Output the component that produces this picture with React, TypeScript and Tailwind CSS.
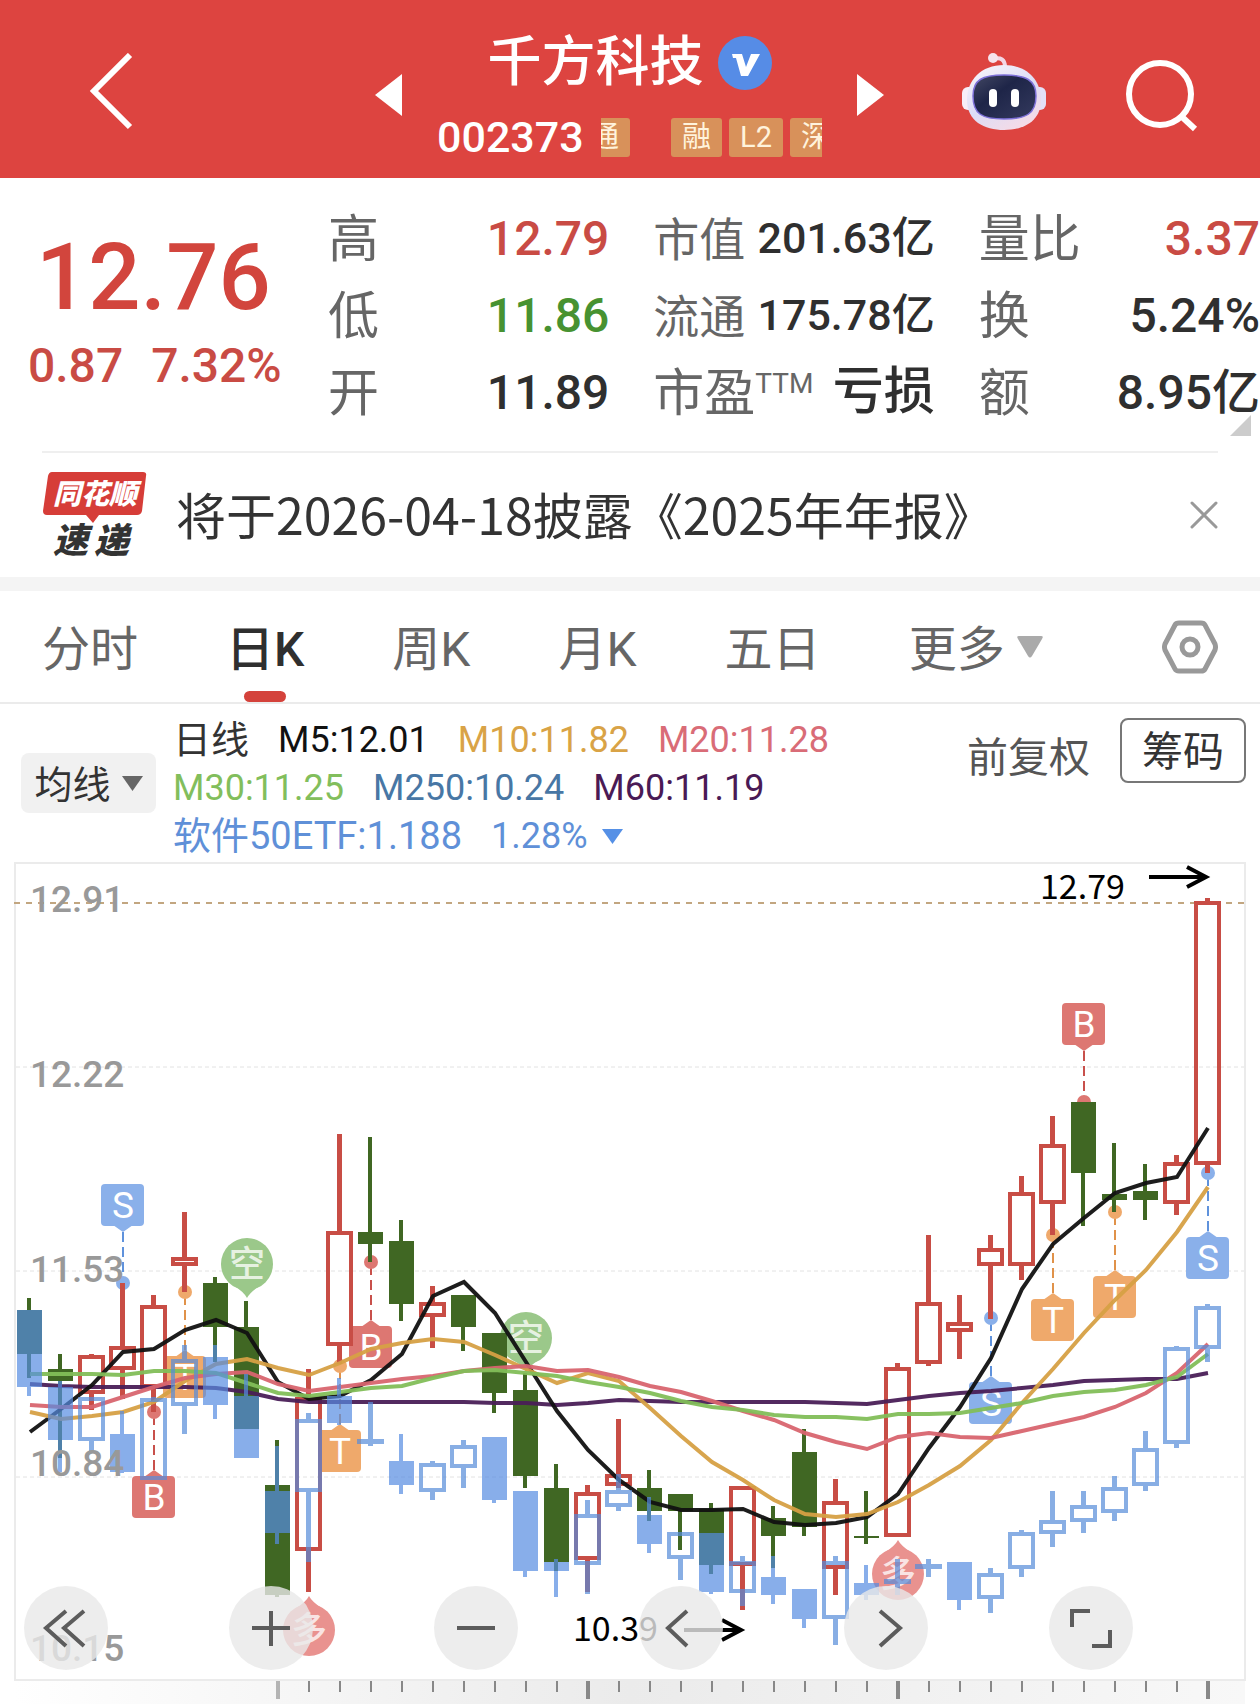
import { useState } from "react";
import type { ReactNode } from "react";

type Candle = {
  dir: 'up' | 'down';
  high: number;
  top: number;
  bottom: number;
  low: number;
};

type Marker = {
  index: number;
  label: 'B' | 'S' | 'T';
  dot: number;
  above?: boolean;
};

const STEP = 31;
const FIRST_X = 30;
const FONT = "font-['Roboto','Noto_Sans_CJK_SC',sans-serif]";
const FONT_CJK = "font-['Noto_Sans_CJK_SC',sans-serif]";

const up = (high: number, top: number, bottom: number, low: number): Candle => ({ dir: 'up', high, top, bottom, low });
const down = (high: number, top: number, bottom: number, low: number): Candle => ({ dir: 'down', high, top, bottom, low });

const stockCandles: Candle[] = [
  down(1298, 1310, 1354, 1378), down(1354, 1369, 1381, 1458), up(1354, 1355, 1394, 1410), up(1283, 1346, 1370, 1399),
  up(1295, 1305, 1388, 1412), up(1212, 1257, 1266, 1292), down(1277, 1283, 1327, 1362), down(1301, 1327, 1429, 1429),
  down(1440, 1485, 1595, 1597), up(1369, 1397, 1551, 1592), up(1134, 1231, 1346, 1364), down(1137, 1232, 1244, 1262),
  down(1220, 1241, 1304, 1321), up(1286, 1302, 1317, 1348), down(1295, 1295, 1327, 1351), down(1333, 1333, 1393, 1413),
  down(1373, 1390, 1476, 1488), down(1464, 1488, 1562, 1571), up(1485, 1492, 1560, 1592), up(1419, 1474, 1486, 1488),
  down(1470, 1488, 1511, 1521), down(1494, 1494, 1511, 1550), down(1503, 1509, 1565, 1574), up(1486, 1486, 1566, 1610),
  down(1506, 1518, 1536, 1568), down(1429, 1452, 1527, 1536), up(1479, 1501, 1569, 1595), down(1491, 1536, 1538, 1544),
  up(1363, 1367, 1537, 1537), up(1235, 1302, 1364, 1366), up(1295, 1322, 1332, 1359), up(1235, 1248, 1266, 1319),
  up(1176, 1192, 1266, 1280), up(1116, 1144, 1204, 1235), down(1102, 1102, 1173, 1226), down(1143, 1194, 1200, 1212),
  down(1164, 1191, 1200, 1220), up(1155, 1162, 1204, 1215), up(898, 901, 1165, 1173),
];

const etfCandles: Candle[] = [
  down(1310, 1310, 1387, 1396), down(1381, 1387, 1440, 1472), up(1397, 1397, 1441, 1451), down(1411, 1434, 1472, 1473),
  up(1397, 1398, 1480, 1480), up(1345, 1359, 1406, 1434), down(1345, 1357, 1405, 1419), down(1374, 1396, 1458, 1458),
  down(1446, 1491, 1533, 1544), up(1413, 1419, 1492, 1562), down(1378, 1396, 1423, 1425), up(1402, 1439, 1444, 1446),
  down(1434, 1461, 1485, 1494), up(1461, 1463, 1492, 1500), up(1440, 1445, 1468, 1488), down(1437, 1437, 1500, 1503),
  down(1491, 1491, 1571, 1577), down(1559, 1562, 1571, 1597), up(1500, 1514, 1565, 1594), up(1474, 1490, 1507, 1511),
  down(1497, 1515, 1544, 1553), up(1532, 1532, 1559, 1580), down(1533, 1533, 1592, 1594), up(1556, 1561, 1593, 1606),
  down(1556, 1577, 1595, 1604), down(1589, 1589, 1619, 1628), up(1556, 1561, 1619, 1645), down(1565, 1583, 1595, 1600),
  up(1559, 1579, 1584, 1595), up(1559, 1564, 1569, 1577), down(1562, 1562, 1600, 1610), up(1568, 1573, 1599, 1613),
  up(1530, 1532, 1569, 1577), up(1491, 1520, 1534, 1547), up(1491, 1505, 1522, 1533), up(1476, 1487, 1513, 1521),
  up(1431, 1448, 1486, 1491), up(1346, 1347, 1444, 1448), up(1304, 1306, 1349, 1362),
];

const averages = [
  {
    color: '#4a1f57',
    values: [1384, 1386, 1387, 1387, 1387, 1387, 1388, 1392, 1399, 1402, 1402, 1402, 1402, 1402, 1402, 1403, 1403, 1405, 1403, 1400, 1401, 1402, 1402, 1402, 1402, 1402, 1403, 1404, 1400, 1396, 1393, 1391, 1388, 1385, 1381, 1380, 1379, 1379, 1373],
  },
  {
    color: '#111111',
    values: [1432, 1409, 1385, 1352, 1349, 1330, 1320, 1333, 1382, 1399, 1396, 1380, 1354, 1296, 1282, 1313, 1362, 1411, 1450, 1480, 1502, 1510, 1510, 1509, 1522, 1525, 1523, 1517, 1494, 1448, 1407, 1358, 1289, 1244, 1218, 1193, 1183, 1177, 1128],
  },
  {
    color: '#d6a044',
    values: [1412, 1419, 1416, 1412, 1402, 1381, 1364, 1359, 1368, 1375, 1363, 1349, 1343, 1339, 1342, 1355, 1369, 1383, 1373, 1381, 1408, 1436, 1462, 1480, 1500, 1514, 1517, 1514, 1502, 1485, 1466, 1440, 1403, 1369, 1333, 1300, 1270, 1232, 1187],
  },
  {
    color: '#d8656f',
    values: [1405, 1407, 1407, 1397, 1387, 1378, 1374, 1372, 1384, 1391, 1387, 1383, 1379, 1376, 1371, 1368, 1366, 1371, 1370, 1377, 1386, 1392, 1401, 1411, 1420, 1433, 1442, 1449, 1437, 1433, 1437, 1438, 1431, 1424, 1417, 1407, 1393, 1373, 1344],
  },
  {
    color: '#82be58',
    values: [1374, 1374, 1374, 1375, 1371, 1371, 1373, 1383, 1393, 1396, 1392, 1388, 1386, 1378, 1371, 1370, 1373, 1376, 1382, 1387, 1393, 1401, 1407, 1410, 1415, 1417, 1417, 1419, 1414, 1414, 1413, 1408, 1403, 1396, 1392, 1390, 1385, 1377, 1354],
  },
];

const markers: Marker[] = [
  { index: 3, label: 'S', dot: 1283, above: true },
  { index: 4, label: 'B', dot: 1412 },
  { index: 5, label: 'T', dot: 1292 },
  { index: 10, label: 'T', dot: 1366 },
  { index: 11, label: 'B', dot: 1262 },
  { index: 31, label: 'S', dot: 1318 },
  { index: 33, label: 'T', dot: 1235 },
  { index: 34, label: 'B', dot: 1102, above: true },
  { index: 35, label: 'T', dot: 1212 },
  { index: 38, label: 'S', dot: 1173 },
];

const markerColors = {
  B: { fill: '#dd7772', line: '#c8504b' },
  S: { fill: '#8ab0ea', line: '#5f92dc' },
  T: { fill: '#efa96b', line: '#e0924a' },
};

const xOf = (i: number) => FIRST_X + i * STEP;

function Candles({ data, upColor, downColor }: { data: Candle[]; upColor: string; downColor: string }) {
  return (
    <>
      {data.map((c, i) => {
        const x = xOf(i) - 1;
        const height = c.bottom - c.top;
        if (c.dir === 'down') {
          return (
            <g key={i} fill={downColor}>
              <rect x={x - 2} y={c.high} width={4} height={c.top - c.high} />
              <rect x={x - 12} y={c.top} width={25} height={height} />
              <rect x={x - 2} y={c.bottom} width={4} height={c.low - c.bottom} />
            </g>
          );
        }
        return (
          <g key={i} fill={upColor}>
            <rect x={x - 2} y={c.high} width={5} height={c.top - c.high} />
            <path
              fillRule="evenodd"
              d={`M${x - 13} ${c.top}h27v${height}h-27z` + (height > 8 ? `M${x - 9} ${c.top + 4}v${height - 8}h19v${8 - height}z` : '')}
            />
            <rect x={x - 2} y={c.bottom} width={5} height={c.low - c.bottom} />
          </g>
        );
      })}
    </>
  );
}

function TradeMarker({ index, label, dot, above }: Marker) {
  const x = xOf(index);
  const { fill, line } = markerColors[label];
  const boxTop = above ? dot - 99 : dot + 64;
  const tip = above ? boxTop + 48 : boxTop - 6;
  const base = above ? boxTop + 41 : boxTop + 1;
  return (
    <g>
      <path d={`M${x} ${tip}V${dot}`} stroke={line} strokeWidth={2} strokeDasharray="10 5" />
      <circle cx={x} cy={dot} r={7} fill={fill} />
      <rect x={x - 22} y={boxTop} width={43} height={42} rx={4} fill={fill} />
      <path d={`M${x - 10} ${base}L${x} ${tip}L${x + 10} ${base}z`} fill={fill} />
      <text x={x} y={boxTop + 34} textAnchor="middle" fontSize={37} fill="#fff">{label}</text>
    </g>
  );
}

function Balloon({ x, y, tip, fill, label }: { x: number; y: number; tip: number; fill: string; label: string }) {
  const side = tip > y ? 1 : -1;
  return (
    <g>
      <circle cx={x} cy={y} r={26} fill={fill} />
      <path d={`M${x - 14} ${y + 21 * side}Q${x - 3} ${y + 28 * side} ${x} ${tip}Q${x + 3} ${y + 28 * side} ${x + 14} ${y + 21 * side}z`} fill={fill} />
      <text x={x} y={y + 13} textAnchor="middle" fontSize={36} fontWeight={500} fill="#fff" fillOpacity={0.75}>{label}</text>
    </g>
  );
}

function Chart() {
  return (
    <svg viewBox="0 860 1260 844" className={`block h-auto w-full ${FONT}`} role="img" aria-label="日K">
      <defs>
        <linearGradient id="ruler">
          <stop offset="0" stopColor="#fff" />
          <stop offset="0.5" stopColor="#ebebeb" />
          <stop offset="1" stopColor="#f8f8f8" />
        </linearGradient>
      </defs>
      <rect x={15} y={1680} width={1230} height={24} fill="url(#ruler)" />
      <rect x={15} y={863} width={1230} height={817} fill="none" stroke="#ebebeb" strokeWidth={2} />
      {[1067, 1271, 1477].map((y) => (
        <path key={y} d={`M16 ${y}H1244`} stroke="#e2e2e2" strokeWidth={1} strokeDasharray="4 3" />
      ))}
      <path d="M14 903H1244" stroke="#c2a680" strokeWidth={2} strokeDasharray="6 6" />

      {markers.map((m) => <TradeMarker key={m.index} {...m} />)}
      <Balloon x={247} y={1264} tip={1298} fill="#9bc88a" label="空" />
      <Balloon x={526} y={1338} tip={1372} fill="#9bc88a" label="空" />
      <Balloon x={309} y={1630} tip={1596} fill="#e9928f" label="多" />
      <Balloon x={898} y={1574} tip={1540} fill="#e9928f" label="多" />

      <Candles data={stockCandles} upColor="#c84d45" downColor="#406723" />
      {averages.map((line) => (
        <polyline
          key={line.color}
          points={line.values.map((y, i) => `${xOf(i)},${y}`).join(' ')}
          fill="none"
          stroke={line.color}
          strokeWidth={4}
          strokeOpacity={0.95}
        />
      ))}
      <g opacity={0.7}>
        <Candles data={etfCandles} upColor="#568cda" downColor="#568ce2" />
      </g>

      <g fontSize={37} fontWeight={500} fill="#999">
        <text x={30} y={912}>12.91</text>
        <text x={30} y={1087}>12.22</text>
        <text x={30} y={1282}>11.53</text>
        <text x={30} y={1476}>10.84</text>
        <text x={30} y={1661}>10.15</text>
      </g>
      <g fontSize={34} className={FONT_CJK}>
        <text x={1040} y={899}>12.79</text>
        <text x={573} y={1641}>10.39</text>
      </g>
      <g stroke="#000" strokeWidth={4} fill="none">
        <path d="M1149 877H1205" />
        <path d="M1187 867L1206 877L1187 887" />
        <path d="M684 1630H741" />
        <path d="M722 1620L741 1630L722 1640" />
      </g>

      {Array.from({ length: 31 }, (_, n) => n + 8).map((i) => {
        const major = i % 10 === 8;
        return (
          <rect
            key={i}
            x={xOf(i) - (major ? 2 : 1)}
            y={1681}
            width={major ? 4 : 2}
            height={major ? 18 : 11}
            fill={i === 8 ? '#b4b4b4' : '#888'}
          />
        );
      })}
    </svg>
  );
}

function RobotIcon() {
  return (
    <svg width="84" height="78" viewBox="0 0 84 78">
      <defs>
        <linearGradient id="shell" x1="0" y1="0" x2="0.6" y2="1">
          <stop offset="0" stopColor="#fbf7fb" />
          <stop offset="0.6" stopColor="#dcdcf6" />
          <stop offset="1" stopColor="#f3dbe8" />
        </linearGradient>
        <linearGradient id="visor" x1="0" y1="0" x2="1" y2="1">
          <stop offset="0" stopColor="#434864" />
          <stop offset="0.4" stopColor="#1e2548" />
          <stop offset="1" stopColor="#343a5e" />
        </linearGradient>
      </defs>
      <path d="M31 6Q43 3 43 14" fill="none" stroke="#f3d6e4" strokeWidth="4" />
      <circle cx="31" cy="5" r="5" fill="#f6e3ec" />
      <rect x="0" y="34" width="14" height="23" rx="6" fill="#f7eef8" />
      <rect x="70" y="34" width="14" height="23" rx="6" fill="#e3e0f8" />
      <path d="M42 12C65 12 79 27 79 47C79 68 62 77 42 77C22 77 5 68 5 47C5 27 19 12 42 12z" fill="url(#shell)" />
      <path d="M42 22C64 22 74 27 74 43C74 61 64 66 42 66C20 66 11 61 11 43C11 27 20 22 42 22z" fill="url(#visor)" stroke="#7d70d8" strokeWidth="1.5" />
      <rect x="27" y="36" width="8" height="18" rx="4" fill="#fff" />
      <rect x="49" y="36" width="8" height="18" rx="4" fill="#fff" />
    </svg>
  );
}

function Tag({ children }: { children: ReactNode }) {
  return (
    <span className="flex h-[39px] shrink-0 items-center rounded-[3px] bg-[#d8915a] px-[11px] text-[29px] leading-[39px] text-[#fff3dc]">
      {children}
    </span>
  );
}

function Header() {
  return (
    <header className="flex h-[178px] items-center bg-[#dd4440] text-white">
      <button aria-label="返回" className="ml-[88px] pt-[6px]">
        <svg width="46" height="78" viewBox="0 0 46 78" fill="none" stroke="#fff" strokeWidth="6">
          <path d="M42 2L6 38L42 74" />
        </svg>
      </button>
      <button aria-label="上一只" className="ml-auto pt-[12px]">
        <svg width="27" height="42" viewBox="0 0 27 42" fill="#fff"><path d="M27 0V42L0 21z" /></svg>
      </button>
      <div className="mx-[35px] flex w-[385px] flex-col items-center pt-[12px]">
        <div className="flex items-center gap-[14px]">
          <h1 className="text-[54px] leading-[70px] font-medium">千方科技</h1>
          <svg width="54" height="54" viewBox="0 0 54 54" aria-label="认证">
            <circle cx="27" cy="27" r="27" fill="#568ce6" />
            <path d="M14 18H24L28 31L33 18H42L30 40H23L18 22H15z" fill="#fff" />
          </svg>
        </div>
        <div className="mt-[14px] flex w-full items-center">
          <span className="text-[43px] leading-[50px] font-medium">002373</span>
          <div className="ml-auto flex w-[221px] gap-[7px] overflow-hidden">
            <div className="mr-[34px] flex w-[29px] shrink-0 justify-end overflow-hidden">
              <Tag>通</Tag>
            </div>
            <Tag>融</Tag>
            <Tag>L2</Tag>
            <Tag>深</Tag>
          </div>
        </div>
      </div>
      <button aria-label="下一只" className="mr-[78px] pt-[12px]">
        <svg width="27" height="42" viewBox="0 0 27 42" fill="#fff"><path d="M0 0V42L27 21z" /></svg>
      </button>
      <button aria-label="助手" className="mr-[79px] pt-[6px]"><RobotIcon /></button>
      <button aria-label="搜索" className="mr-[61px] pt-[14px]">
        <svg width="74" height="72" viewBox="0 0 74 72" fill="none" stroke="#fff" strokeWidth="6">
          <circle cx="35" cy="34" r="31" />
          <path d="M56 56L70 69" />
        </svg>
      </button>
    </header>
  );
}

const stats = [
  [
    { name: '高', value: '12.79', tone: 'text-[#c94b44]' },
    { name: '低', value: '11.86', tone: 'text-[#479231]' },
    { name: '开', value: '11.89', tone: 'text-[#2f2f2f]' },
  ],
  [
    { name: '市值', value: '201.63亿', tone: 'text-[#2f2f2f]', small: true },
    { name: '流通', value: '175.78亿', tone: 'text-[#2f2f2f]', small: true },
    { name: '市盈', sup: 'TTM', value: '亏损', tone: 'text-[#2f2f2f]' },
  ],
  [
    { name: '量比', value: '3.37', tone: 'text-[#c94b44]' },
    { name: '换', value: '5.24%', tone: 'text-[#2f2f2f]' },
    { name: '额', value: '8.95亿', tone: 'text-[#2f2f2f]' },
  ],
];

function Quote() {
  return (
    <section className="relative flex h-[273px] pt-[22px]">
      <div className="w-[328px] shrink-0 text-[#d2453d]">
        <div className="pt-[22px] pl-[36px] text-[92px] leading-[112px] font-medium">12.76</div>
        <div className="flex gap-[28px] pl-[28px] text-[48px] leading-[64px] font-medium text-[#c94b44]">
          <span>0.87</span>
          <span>7.32%</span>
        </div>
      </div>
      <div className="grid flex-1 grid-cols-3 gap-[44px]">
        {stats.map((group, n) => (
          <dl key={n}>
            {group.map((s) => (
              <div key={s.name} className="flex h-[77px] items-center justify-between whitespace-nowrap">
                <dt className={`flex pt-[4px] text-[#666] ${'small' in s ? 'text-[46px]' : 'text-[51px]'}`}>
                  {s.name}
                  {'sup' in s && <sup className="top-0 pt-[12px] text-[28px] leading-[32px]">{s.sup}</sup>}
                </dt>
                <dd className={`font-medium ${s.tone} ${'small' in s ? 'text-[43px]' : 'sup' in s ? 'text-[51px]' : 'text-[48px]'}`}>{s.value}</dd>
              </div>
            ))}
          </dl>
        ))}
      </div>
      <svg className="absolute right-[9px] bottom-[15px]" width="21" height="21" viewBox="0 0 21 21"><path d="M21 0V21H0z" fill="#ccc" /></svg>
    </section>
  );
}

function News() {
  return (
    <section className="mx-[42px] flex h-[126px] items-center border-t-2 border-[#efefef]">
      <svg width="106" height="90" viewBox="0 0 106 90" className={`shrink-0 overflow-visible ${FONT_CJK}`}>
        <path d="M10 2H101Q105 2 104 6L100 41Q99 45 95 45H57L51 53L44 45H5Q1 45 1 41L6 6Q7 2 10 2z" fill="#d63d38" />
        <text x="53" y="34" textAnchor="middle" fontSize="28" fontWeight="900" fontStyle="italic" fill="#fff">同花顺</text>
        <text x="11" y="83" fontSize="35" fontWeight="900" fontStyle="italic" fill="#333">速</text>
        <text x="52" y="83" fontSize="35" fontWeight="900" fontStyle="italic" fill="#333">递</text>
      </svg>
      <p className={`ml-[28px] pb-[4px] text-[50px] leading-[72px] whitespace-nowrap text-[#333] ${FONT_CJK}`}>将于2026-04-18披露《2025年年报》</p>
      <button aria-label="关闭" className="ml-auto">
        <svg width="28" height="28" viewBox="0 0 28 28" stroke="#999" strokeWidth="3" strokeLinecap="round"><path d="M2 2L26 26M26 2L2 26" /></svg>
      </button>
    </section>
  );
}

const tabs = ['分时', '日K', '周K', '月K', '五日'];

function Tabs() {
  const [active, setActive] = useState('日K');
  return (
    <nav className="flex h-[113px] items-stretch border-b-2 border-[#ebebeb] px-[42px] text-[48px]">
      <div className="flex gap-[88px]">
        {tabs.map((tab) => (
          <button
            key={tab}
            onClick={() => setActive(tab)}
            className={`relative pt-[7px] whitespace-nowrap ${active === tab ? 'font-medium text-[#2f2f2f]' : 'text-[#666]'}`}
          >
            {tab}
            {active === tab && <span className="absolute bottom-0 left-1/2 h-[11px] w-[42px] -translate-x-1/2 rounded-full bg-[#d4423b]" />}
          </button>
        ))}
        <button className="flex items-center gap-[12px] whitespace-nowrap text-[#666]">
          <span className="pt-[7px]">更多</span>
          <svg width="26" height="22" viewBox="0 0 26 22" fill="#aaa"><path d="M2 0H24Q27 0 25 3L15 20Q13 23 11 20L1 3Q-1 0 2 0z" /></svg>
        </button>
      </div>
      <button aria-label="设置" className="ml-auto">
        <svg width="56" height="54" viewBox="0 0 56 54" fill="none" stroke="#999" strokeWidth="5" strokeLinejoin="round">
          <path d="M17 3H39Q42 3 43 5L53 24Q54 27 53 30L43 49Q42 51 39 51H17Q14 51 13 49L3 30Q2 27 3 24L13 5Q14 3 17 3z" />
          <circle cx="28" cy="27" r="8" />
        </svg>
      </button>
    </nav>
  );
}

function Legend() {
  return (
    <section className="flex h-[156px] pt-[10px]">
      <button className="mt-[39px] ml-[21px] flex h-[60px] w-[135px] shrink-0 items-center justify-center gap-[11px] rounded-lg bg-[#f1f1f1] text-[38px] text-[#333]">
        <span className="pt-[5px]">均线</span>
        <svg width="21" height="15" viewBox="0 0 21 15" fill="#666"><path d="M0 0H21L10.5 15z" /></svg>
      </button>
      <div className="ml-[17px] pt-[2px] text-[36px] leading-[48px] whitespace-nowrap">
        <div className="flex gap-[29px]">
          <span className="text-[38px] text-[#333]">日线</span>
          <span className="text-[#111]">M5:12.01</span>
          <span className="text-[#d9a346]">M10:11.82</span>
          <span className="text-[#d96c77]">M20:11.28</span>
        </div>
        <div className="flex gap-[29px]">
          <span className="text-[#82be5c]">M30:11.25</span>
          <span className="text-[#4877a5]">M250:10.24</span>
          <span className="text-[#4a1a55]">M60:11.19</span>
        </div>
        <div className="flex items-center gap-[29px] text-[38px] text-[#5f90d8]">
          <span>软件50ETF:1.188</span>
          <button className="flex items-center gap-[14px] text-[36px]">
            1.28%
            <svg width="21" height="15" viewBox="0 0 21 15" fill="#5590e6"><path d="M0 0H21L10.5 15z" /></svg>
          </button>
        </div>
      </div>
      <button className="mt-[14px] ml-auto h-[60px] text-[41px] leading-[60px] whitespace-nowrap text-[#555]">前复权</button>
      <button className="mt-[4px] mr-[14px] ml-[30px] h-[65px] w-[126px] shrink-0 rounded-lg border-2 border-[#777] pt-[4px] text-[41px] leading-[57px] text-[#333]">筹码</button>
    </section>
  );
}

const controls = [
  { name: '最早', d: 'M42 25L22 42L42 60M60 25L40 42L60 60' },
  { name: '放大', d: 'M23 42H61M42 25V60' },
  { name: '缩小', d: 'M23 42H61' },
  { name: '左移', d: 'M48 25L29 42L48 60' },
  { name: '右移', d: 'M36 25L56 42L36 60' },
  { name: '全屏', d: 'M23 41V25H41M61 44V60H43' },
];

export default function App() {
  return (
    <main className={`min-w-[1260px] bg-white ${FONT}`}>
      <Header />
      <Quote />
      <News />
      <div className="h-[14px] bg-[#f4f4f4]" />
      <Tabs />
      <div className="relative">
        <Legend />
        <Chart />
        <div className="absolute bottom-[34px] left-[24px] flex gap-[121px]">
          {controls.map((c) => (
            <button key={c.name} aria-label={c.name} className="size-[84px] rounded-full bg-[#e8e8e8]/80">
              <svg width="84" height="84" viewBox="0 0 84 84" fill="none" stroke="#5c5c5c" strokeWidth="4"><path d={c.d} /></svg>
            </button>
          ))}
        </div>
      </div>
    </main>
  );
}
